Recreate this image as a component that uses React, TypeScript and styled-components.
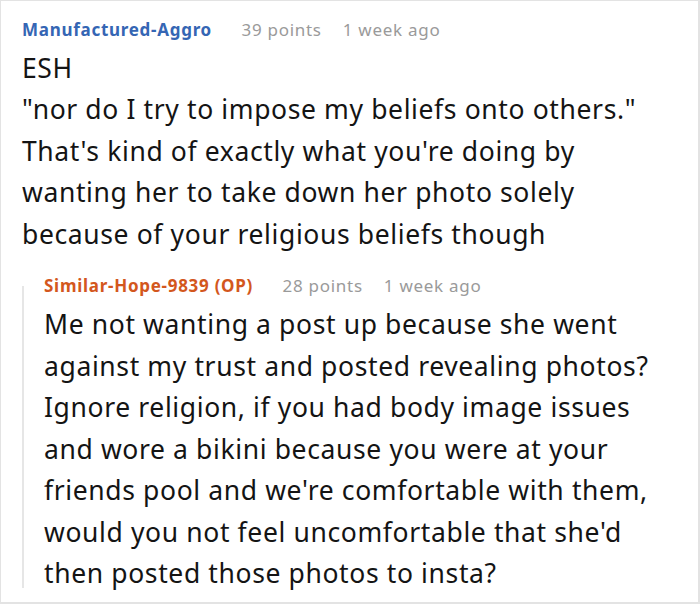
import React from "react";
import styled, { createGlobalStyle } from "styled-components";

const Global = createGlobalStyle`
  html, body { margin: 0; padding: 0; background: #fff; }
  body { font-family: "Noto Sans", "Open Sans", sans-serif; }
`;

const Card = styled.div`
  width: 700px;
  height: 604px;
  box-sizing: border-box;
  border-style: solid;
  border-color: #e3e3e3;
  border-width: 1px 2px 2px 1px;
  padding: 16.5px 20px 0 21px;
  overflow: hidden;
  background: #fff;
`;

const Header = styled.div`
  display: flex;
  align-items: baseline;
  font-size: 17px;
  line-height: 24px;
  letter-spacing: 0.72px;
  margin-bottom: 6px;
  white-space: nowrap;
`;

const Author = styled.span<{ $op?: boolean }>`
  font-weight: 700;
  color: ${(p) => (p.$op ? "#d3571d" : "#3566b4")};
  margin-right: 29.5px;
`;

const Meta = styled.span`
  color: #9a9a9a;
  & + & {
    margin-left: 21px;
  }
`;

const Body = styled.div`
  font-size: 26.5px;
  line-height: 41.5px;
  letter-spacing: 0.62px;
  color: #141414;
`;

const Line = styled.div`
  white-space: nowrap;
`;

const Reply = styled.div`
  position: relative;
  margin-top: 19.4px;
  padding-left: 22px;
  &::before {
    content: "";
    position: absolute;
    left: 0;
    top: 12px;
    bottom: 7px;
    width: 2px;
    background: #e6e6e6;
  }
`;

type CommentProps = {
  author: string;
  op?: boolean;
  points: string;
  time: string;
  lines: string[];
};

const Comment = ({ author, op, points, time, lines }: CommentProps) => (
  <>
    <Header>
      <Author $op={op}>{author}</Author>
      <Meta>{points}</Meta>
      <Meta>{time}</Meta>
    </Header>
    <Body>
      {lines.map((l, i) => (
        <Line key={i}>{l}</Line>
      ))}
    </Body>
  </>
);

export default function App() {
  return (
    <>
      <Global />
      <Card>
        <Comment
          author="Manufactured-Aggro"
          points="39 points"
          time="1 week ago"
          lines={[
            "ESH",
            "\"nor do I try to impose my beliefs onto others.\"",
            "That's kind of exactly what you're doing by",
            "wanting her to take down her photo solely",
            "because of your religious beliefs though",
          ]}
        />
        <Reply>
          <Comment
            author="Similar-Hope-9839 (OP)"
            op
            points="28 points"
            time="1 week ago"
            lines={[
              "Me not wanting a post up because she went",
              "against my trust and posted revealing photos?",
              "Ignore religion, if you had body image issues",
              "and wore a bikini because you were at your",
              "friends pool and we're comfortable with them,",
              "would you not feel uncomfortable that she'd",
              "then posted those photos to insta?",
            ]}
          />
        </Reply>
      </Card>
    </>
  );
}
